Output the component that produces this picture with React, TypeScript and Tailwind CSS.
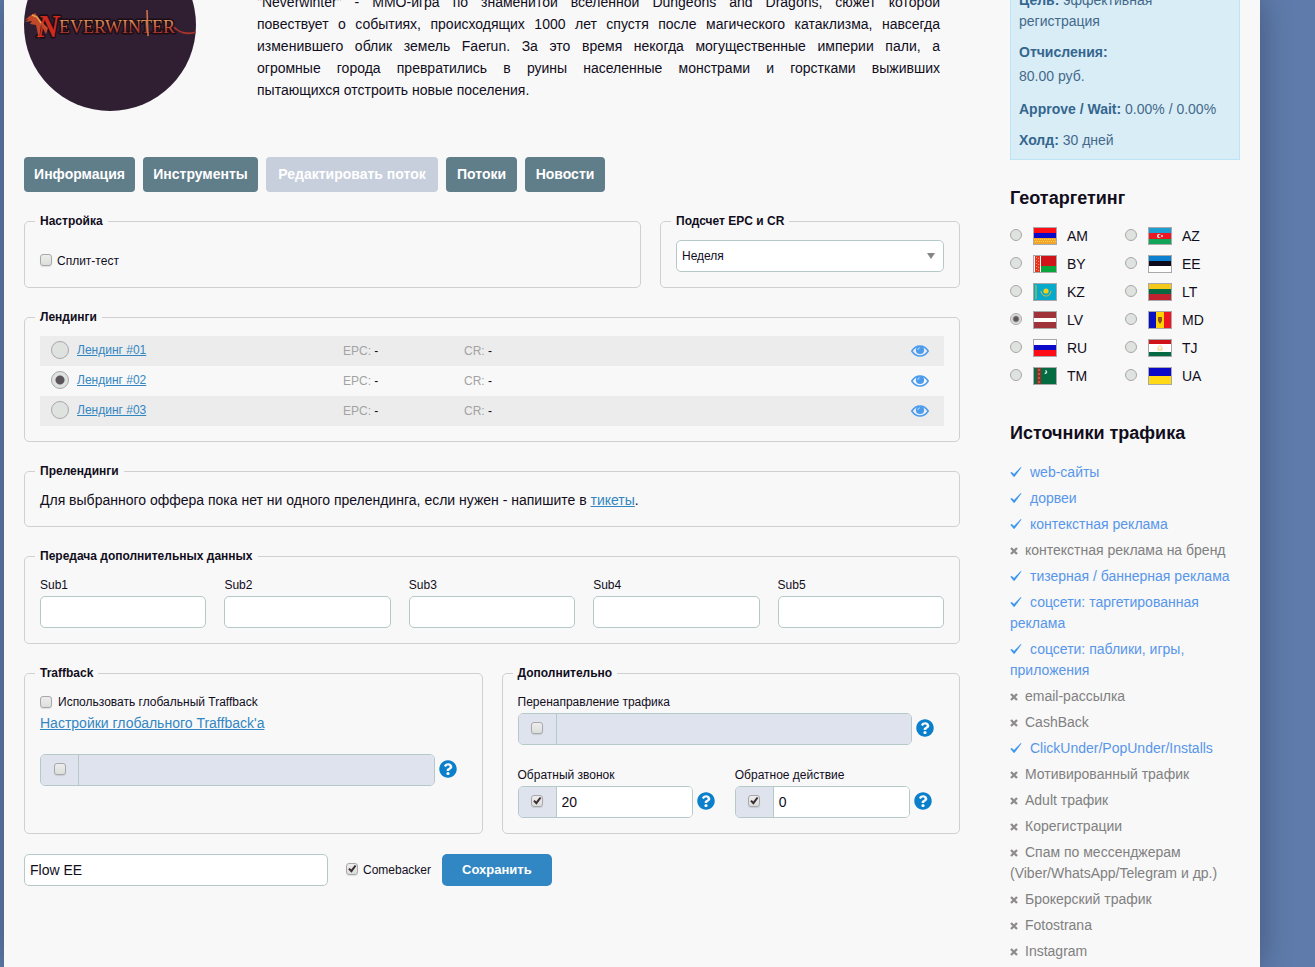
"use client";
import React, { useState } from "react";
import { FaQuestionCircle } from "react-icons/fa";

const tabs = [
  { name: "Информация", width: "min-w-[111px]" },
  { name: "Инструменты", width: "min-w-[115px]" },
  { name: "Редактировать поток", width: "min-w-[172px]" },
  { name: "Потоки", width: "min-w-[71px]" },
  { name: "Новости", width: "min-w-[80px]" },
];

const description = [
  "\"Neverwinter\" - ММО-игра по знаменитой вселенной Dungeons and Dragons, сюжет которой",
  "повествует о событиях, происходящих 1000 лет спустя после магического катаклизма, навсегда",
  "изменившего облик земель Faerun. За это время некогда могущественные империи пали, а",
  "огромные города превратились в руины населенные монстрами и горстками выживших",
];

const landings = ["Лендинг #01", "Лендинг #02", "Лендинг #03"];

const subs = ["Sub1", "Sub2", "Sub3", "Sub4", "Sub5"];

const countries = [
  "AM",
  "AZ",
  "BY",
  "EE",
  "KZ",
  "LT",
  "LV",
  "MD",
  "RU",
  "TJ",
  "TM",
  "UA",
];

const sources = [
  { name: "web-сайты", allowed: true },
  { name: "дорвеи", allowed: true },
  { name: "контекстная реклама", allowed: true },
  { name: "контекстная реклама на бренд", allowed: false },
  { name: "тизерная / баннерная реклама", allowed: true },
  { name: "соцсети: таргетированная реклама", allowed: true },
  { name: "соцсети: паблики, игры, приложения", allowed: true },
  { name: "email-рассылка", allowed: false },
  { name: "CashBack", allowed: false },
  { name: "ClickUnder/PopUnder/Installs", allowed: true },
  { name: "Мотивированный трафик", allowed: false },
  { name: "Adult трафик", allowed: false },
  { name: "Корегистрации", allowed: false },
  { name: "Спам по мессенджерам (Viber/WhatsApp/Telegram и др.)", allowed: false },
  { name: "Брокерский трафик", allowed: false },
  { name: "Fotostrana", allowed: false },
  { name: "Instagram", allowed: false },
];

const FlagShapes: React.FC<{ code: string }> = ({ code }) => {
  switch (code) {
    case "AM":
      return (
        <>
          <rect width="22" height="6" fill="#ff0d17" />
          <rect y="5" width="22" height="6" fill="#0a0ac8" />
          <rect y="10" width="22" height="6" fill="#f2a52c" />
          <path d="M0 11.500h22M1 13.500h21" stroke="#ffd23a" strokeDasharray="1 1" />
        </>
      );
    case "AZ":
      return (
        <>
          <rect width="22" height="6" fill="#1c9fd0" />
          <rect y="5" width="22" height="6" fill="#ee1622" />
          <rect y="11" width="22" height="5" fill="#10a558" />
          <circle cx="10" cy="8" r="2" fill="#fff" />
          <circle cx="11" cy="8" r="1.5" fill="#ee1622" />
          <circle cx="13" cy="8" r="0.9" fill="#fff" />
        </>
      );
    case "BY":
      return (
        <>
          <rect width="22" height="10" fill="#d01317" />
          <rect y="10" width="22" height="6" fill="#06a63c" />
          <rect width="7" height="16" fill="#fff" />
          <rect x="1" width="5" height="16" fill="#e8301f" />
          <path d="M2.500 1v15M4.500 2v14" stroke="#f6a080" strokeDasharray="1 2" />
        </>
      );
    case "EE":
      return (
        <>
          <rect width="22" height="5" fill="#0b7fd0" />
          <rect y="5" width="22" height="5" fill="#0d0a1c" />
          <rect y="10" width="22" height="6" fill="#fff" />
        </>
      );
    case "KZ":
      return (
        <>
          <rect width="22" height="16" fill="#08aacb" />
          <rect x="1" y="1" width="2" height="14" fill="#6cb47a" />
          <circle cx="12" cy="7" r="2.600" fill="#f6cf1c" />
          <path d="M7 7q1 5 5 5t5-5" fill="none" stroke="#b9b94a" strokeWidth="1.200" />
        </>
      );
    case "LT":
      return (
        <>
          <rect width="22" height="6" fill="#f5c81c" />
          <rect y="5" width="22" height="6" fill="#066a43" />
          <rect y="10" width="22" height="6" fill="#c02230" />
        </>
      );
    case "LV":
      return (
        <>
          <rect width="22" height="16" fill="#a0333a" />
          <rect y="6" width="22" height="4" fill="#fff" />
        </>
      );
    case "MD":
      return (
        <>
          <rect width="7" height="16" fill="#0a10c4" />
          <rect x="7" width="8" height="16" fill="#ffd200" />
          <rect x="15" width="7" height="16" fill="#ee1622" />
          <path d="M9 5h4v4l-2 3-2-3z" fill="#8a5322" />
        </>
      );
    case "RU":
      return (
        <>
          <rect width="22" height="6" fill="#fff" />
          <rect y="5" width="22" height="6" fill="#0a0ac8" />
          <rect y="10" width="22" height="6" fill="#ff0d17" />
        </>
      );
    case "TJ":
      return (
        <>
          <rect width="22" height="16" fill="#fff" />
          <rect width="22" height="4" fill="#d01317" />
          <rect y="12" width="22" height="4" fill="#066a43" />
          <path d="M8 10h6M9 7l2-1.500L13 7v2H9z" fill="none" stroke="#efd98a" />
        </>
      );
    case "TM":
      return (
        <>
          <rect width="22" height="16" fill="#056b40" />
          <rect x="3" width="4" height="16" fill="#a02a26" />
          <path d="M5 1v15" stroke="#d98a5a" strokeDasharray="2 2" />
          <path d="M11 2a2 2 0 1 1-1 3.500A2 2 0 0 0 11 2z" fill="#cfe6da" />
        </>
      );
    default:
      return (
        <>
          <rect width="22" height="8" fill="#0a0ac8" />
          <rect y="8" width="22" height="8" fill="#ffd816" />
        </>
      );
  }
};

const Flag: React.FC<{ code: string }> = ({ code }) => (
  <svg
    viewBox="0 0 22 16"
    aria-hidden="true"
    className="h-[18px] w-6 border border-[#a9a9ad]"
  >
    <FlagShapes code={code} />
  </svg>
);

const EyeIcon = () => (
  <svg viewBox="0 0 18 12" className="h-3 w-[18px]" aria-hidden="true">
    <path
      d="M0.800 6C3 2.500 5.800 0.900 9 0.900s6 1.600 8.200 5.100c-2.200 3.500-5 5.100-8.200 5.100S3 9.500 0.800 6z"
      fill="none"
      stroke="#4b9bef"
      strokeWidth="1.500"
    />
    <circle cx="9" cy="5" r="4.100" fill="#4b9bef" />
    <path d="M6.800 5Q6.900 3 8.800 2.800" fill="none" stroke="#d3e6fa" strokeWidth="0.900" />
  </svg>
);

const CheckMark = () => (
  <svg
    viewBox="0 0 12 10"
    className="mr-2 inline-block h-[10px] w-3 align-baseline"
    aria-hidden="true"
  >
    <path d="M0.300 5.800 1.800 4.900 4 7 10.500 0.200 11.600 0.300 4.600 9.800 3.600 9.800z" fill="#3f98ee" />
  </svg>
);

const CrossMark = () => (
  <svg
    viewBox="0 0 8 8"
    className="mr-[7px] inline-block h-2 w-2 align-baseline"
    aria-hidden="true"
  >
    <path d="M1 1l6 6M7 1L1 7" stroke="#8f8b8d" strokeWidth="2.300" />
  </svg>
);

const Checkbox: React.FC<React.InputHTMLAttributes<HTMLInputElement>> = (props) => (
  <span className="mb-[2px] grid h-3 w-3 shrink-0">
    <input
      type="checkbox"
      className="peer col-start-1 row-start-1 h-3 w-3 appearance-none rounded-[3px] border border-[#a9a7aa] bg-linear-to-b from-[#ededed] to-[#dbdfd9] shadow-[0_1px_1px_rgba(0,0,0,0.1)]"
      {...props}
    />
    <svg
      viewBox="0 0 12 12"
      className="pointer-events-none invisible col-start-1 row-start-1 h-3 w-3 peer-checked:visible"
      aria-hidden="true"
    >
      <path d="M2.200 6.300 3.700 5 5.200 6.500 8.800 2l1.600 1.100-4.900 6.600z" fill="#3d2f36" />
    </svg>
  </span>
);

interface PanelProps {
  title: string;
  className?: string;
  children: React.ReactNode;
}

const Panel: React.FC<PanelProps> = ({ title, className = "", children }) => (
  <fieldset
    className={`min-w-0 rounded-[5px] border border-[#d0d0d0] px-[15px] pt-[10px] pb-[15px] ${className}`}
  >
    <legend className="-ml-[5px] px-[5px] text-xs leading-[17px] font-bold">{title}</legend>
    {children}
  </fieldset>
);

interface ToggleFieldProps {
  label: string;
  defaultValue?: string;
  defaultEnabled?: boolean;
}

const ToggleField: React.FC<ToggleFieldProps> = ({
  label,
  defaultValue = "",
  defaultEnabled = false,
}) => {
  const [enabled, setEnabled] = useState(defaultEnabled);

  return (
    <div className="flex items-center gap-1">
      <div className="flex h-8 min-w-0 flex-1 overflow-hidden rounded-[5px] border border-[#b5cac8]">
        <span className="flex w-[38px] shrink-0 items-center justify-center border-r border-[#b5cac8] bg-[#dfe3ed]">
          <Checkbox
            aria-label={`${label}: включить`}
            checked={enabled}
            onChange={(e) => setEnabled(e.target.checked)}
          />
        </span>
        <input
          type="text"
          aria-label={label}
          disabled={!enabled}
          defaultValue={defaultValue}
          className="min-w-0 flex-1 bg-white px-[5px] text-sm disabled:bg-[#dfe3ed]"
        />
      </div>
      <button type="button" aria-label="Помощь" className="pb-[2px] text-[#0a7fcb]">
        <FaQuestionCircle size={18} />
      </button>
    </div>
  );
};

const Logo = () => (
  <svg
    viewBox="0 0 172 172"
    className="h-[172px] w-[172px] shrink-0 rounded-full bg-[#301f33]"
    role="img"
    aria-label="Neverwinter"
  >
    <defs>
      <linearGradient id="fire" x1="0" y1="0" x2="0" y2="1">
        <stop offset="0.200" stopColor="#e0935a" />
        <stop offset="0.600" stopColor="#bb4430" />
        <stop offset="1" stopColor="#8c2420" />
      </linearGradient>
    </defs>
    <g
      fontFamily="Liberation Serif, serif"
      fill="url(#fire)"
      stroke="#1d0d16"
      strokeWidth="3"
      strokeLinejoin="round"
      paintOrder="stroke"
    >
      <text x="13" y="98" fontSize="31" fontWeight="bold" fontStyle="italic" fill="#cf2a1e">
        N
      </text>
      <text x="35" y="94" fontSize="18">
        EVERWINTER
      </text>
    </g>
    <path
      d="M1 81q5-5 10-7l5 7 8 8-2 6-5-9-2 14-3-14-6-1 2-3-7 1 4-3z"
      fill="#c2482a"
    />
    <path d="M8 76l5 2 4 6" fill="none" stroke="#e9a050" strokeWidth="1.500" />
    <path d="M150 88q8 9 22 5" fill="none" stroke="#a3352a" strokeWidth="1.800" />
    <path d="M123 71l1 26" stroke="#c9734a" strokeWidth="1.600" />
  </svg>
);

const App: React.FC = () => {
  const [landing, setLanding] = useState("Лендинг #02");
  const [country, setCountry] = useState("LV");

  return (
    <div className="h-screen overflow-hidden bg-[#5e7bab] pr-[55px] pl-1 font-['Liberation_Sans',Arial,sans-serif] text-sm text-[#110d1c]">
      <div className="flex min-h-screen gap-[50px] bg-[#f8f8f8] px-5 shadow-[0_0_30px_rgba(0,0,0,0.3)]">
        <main className="min-w-0 flex-1">
          <header className="-mt-[61px] flex items-end gap-[61px] pr-5">
            <Logo />
            <p className="flex-1 pb-[10px] leading-[22px]">
              {description.map((line) => (
                <span key={line} className="block text-justify [text-align-last:justify]">
                  {line}{" "}
                </span>
              ))}
              пытающихся отстроить новые поселения.
            </p>
          </header>

          <nav className="mt-[46px] flex gap-2">
            {tabs.map((tab) => (
              <button
                key={tab.name}
                type="button"
                disabled={tab.name === "Редактировать поток"}
                className={`h-[35px] rounded bg-[#607d8a] pb-[2px] font-bold whitespace-nowrap text-white disabled:bg-[#c7cedc] ${tab.width}`}
              >
                {tab.name}
              </button>
            ))}
          </nav>

          <form className="mt-[21px]" onSubmit={(e) => e.preventDefault()}>
            <div className="flex flex-col gap-[21px]">
              <div className="flex gap-[19px]">
                <Panel title="Настройка" className="flex-1">
                  <label className="mt-3 flex items-center gap-[5px] text-xs leading-[18px]">
                    <Checkbox />
                    Сплит-тест
                  </label>
                </Panel>
                <Panel title="Подсчет EPC и CR" className="w-[300px]">
                  <div className="grid items-center">
                    <select
                      aria-label="Подсчет EPC и CR"
                      className="col-start-1 row-start-1 h-8 w-full appearance-none rounded-[5px] border border-[#b5cac8] bg-white px-[5px] text-xs"
                    >
                      <option>Неделя</option>
                      <option>День</option>
                      <option>Месяц</option>
                    </select>
                    <svg
                      viewBox="0 0 8 6"
                      className="pointer-events-none col-start-1 row-start-1 mr-[9px] h-[6px] w-2 justify-self-end"
                      aria-hidden="true"
                    >
                      <path d="M0 0h8L4 6z" fill="#858585" />
                    </svg>
                  </div>
                </Panel>
              </div>

              <Panel title="Лендинги">
                <table className="w-full table-fixed text-xs">
                  <tbody>
                    {landings.map((name) => (
                      <tr key={name} className="h-[30px] odd:bg-[#ececec]">
                        <td className="w-[303px] p-0 pl-[11px]">
                          <div className="flex items-center gap-2 pb-[2px]">
                            <input
                              type="radio"
                              name="landing"
                              aria-label={name}
                              checked={landing === name}
                              onChange={() => setLanding(name)}
                              className="h-[18px] w-[18px] shrink-0 appearance-none rounded-full border border-[#aaa6ab] bg-[#dfe3df] checked:bg-[radial-gradient(circle,#5c555b_4px,#dfe3df_5px)]"
                            />
                            <a href="#" className="text-[#3286c2] underline">
                              {name}
                            </a>
                          </div>
                        </td>
                        <td className="w-[121px] p-0">
                          <span className="text-[#a3a3a3]">EPC:</span> -
                        </td>
                        <td className="p-0">
                          <span className="text-[#a3a3a3]">CR:</span> -
                        </td>
                        <td className="w-[49px] p-0 pl-4">
                          <a href="#" aria-label={`Просмотр ${name}`} className="flex">
                            <EyeIcon />
                          </a>
                        </td>
                      </tr>
                    ))}
                  </tbody>
                </table>
              </Panel>

              <Panel title="Прелендинги">
                <p className="leading-[21px]">
                  Для выбранного оффера пока нет ни одного прелендинга, если нужен - напишите в{" "}
                  <a href="#" className="text-[#3286c2] underline">
                    тикеты
                  </a>
                  .
                </p>
              </Panel>

              <Panel title="Передача дополнительных данных">
                <div className="grid grid-cols-5 gap-[18px]">
                  {subs.map((sub) => (
                    <label key={sub} className="text-xs leading-[21px]">
                      {sub}
                      <input
                        type="text"
                        className="block h-8 w-full rounded-[5px] border border-[#b5cac8] bg-white px-[5px] text-sm"
                      />
                    </label>
                  ))}
                </div>
              </Panel>

              <div className="grid grid-cols-2 gap-[19px]">
                <Panel title="Traffback">
                  <label className="flex items-center gap-[6px] text-xs leading-[21px]">
                    <Checkbox />
                    Использовать глобальный Traffback
                  </label>
                  <a href="#" className="block leading-[21px] text-[#3286c2] underline">
                    Настройки глобального Traffback'а
                  </a>
                  <div className="mt-5 pr-[10px]">
                    <ToggleField label="Traffback" />
                  </div>
                </Panel>

                <Panel title="Дополнительно">
                  <div className="pr-[10px]">
                    <p className="text-xs leading-[21px]">Перенаправление трафика</p>
                    <ToggleField label="Перенаправление трафика" />
                  </div>
                  <div className="mt-5 grid grid-cols-2 gap-2">
                    <div className="pr-3">
                      <p className="text-xs leading-[21px]">Обратный звонок</p>
                      <ToggleField label="Обратный звонок" defaultValue="20" defaultEnabled />
                    </div>
                    <div className="pr-3">
                      <p className="text-xs leading-[21px]">Обратное действие</p>
                      <ToggleField label="Обратное действие" defaultValue="0" defaultEnabled />
                    </div>
                  </div>
                </Panel>
              </div>
            </div>

            <div className="mt-5 flex items-center">
              <input
                type="text"
                aria-label="Название потока"
                defaultValue="Flow EE"
                className="h-8 w-[304px] rounded-[5px] border border-[#b5cac8] bg-white px-[5px] text-sm"
              />
              <label className="ml-[18px] flex items-center gap-[5px] text-xs">
                <Checkbox defaultChecked />
                Comebacker
              </label>
              <button
                type="submit"
                className="ml-[11px] h-8 rounded-[5px] bg-[#3187c3] px-5 text-[13px] font-bold text-white"
              >
                Сохранить
              </button>
            </div>
          </form>
        </main>

        <aside className="w-[230px] shrink-0">
          <section className="-mt-5 border border-[#bce4f5] bg-[#d9edf7] px-2 pt-[9px] pb-2 leading-[21px] text-[#44698a]">
            <p>
              <b className="text-[#34668e]">Цель:</b> эффективная регистрация
            </p>
            <p className="mt-[10px]">
              <b className="text-[#34668e]">Отчисления:</b>
            </p>
            <p className="mt-[3px]">80.00 руб.</p>
            <p className="mt-3">
              <b className="text-[#34668e]">Approve / Wait:</b> 0.00% / 0.00%
            </p>
            <p className="mt-[10px]">
              <b className="text-[#34668e]">Холд:</b> 30 дней
            </p>
          </section>

          <h2 className="mt-[27px] text-lg leading-[22px] font-bold">Геотаргетинг</h2>
          <div className="mt-[13px] grid grid-cols-2">
            {countries.map((code) => (
              <label key={code} className="flex h-7 items-center">
                <input
                  type="radio"
                  name="country"
                  checked={country === code}
                  onChange={() => setCountry(code)}
                  className="mr-[11px] mb-[2px] h-3 w-3 appearance-none rounded-full border border-[#aaa6ab] bg-[#dfe3df] checked:bg-[radial-gradient(circle,#5c555b_2px,#dfe3df_4px)]"
                />
                <Flag code={code} />
                <span className="ml-[10px]">{code}</span>
              </label>
            ))}
          </div>

          <h2 className="mt-8 text-lg leading-[22px] font-bold">Источники трафика</h2>
          <ul className="mt-[18px] flex flex-col gap-[5px] leading-[21px]">
            {sources.map((source) => (
              <li
                key={source.name}
                className={source.allowed ? "text-[#5796ea]" : "text-[#808080]"}
              >
                {source.allowed ? <CheckMark /> : <CrossMark />}
                {source.name}
              </li>
            ))}
          </ul>
        </aside>
      </div>
    </div>
  );
};

export default App;
